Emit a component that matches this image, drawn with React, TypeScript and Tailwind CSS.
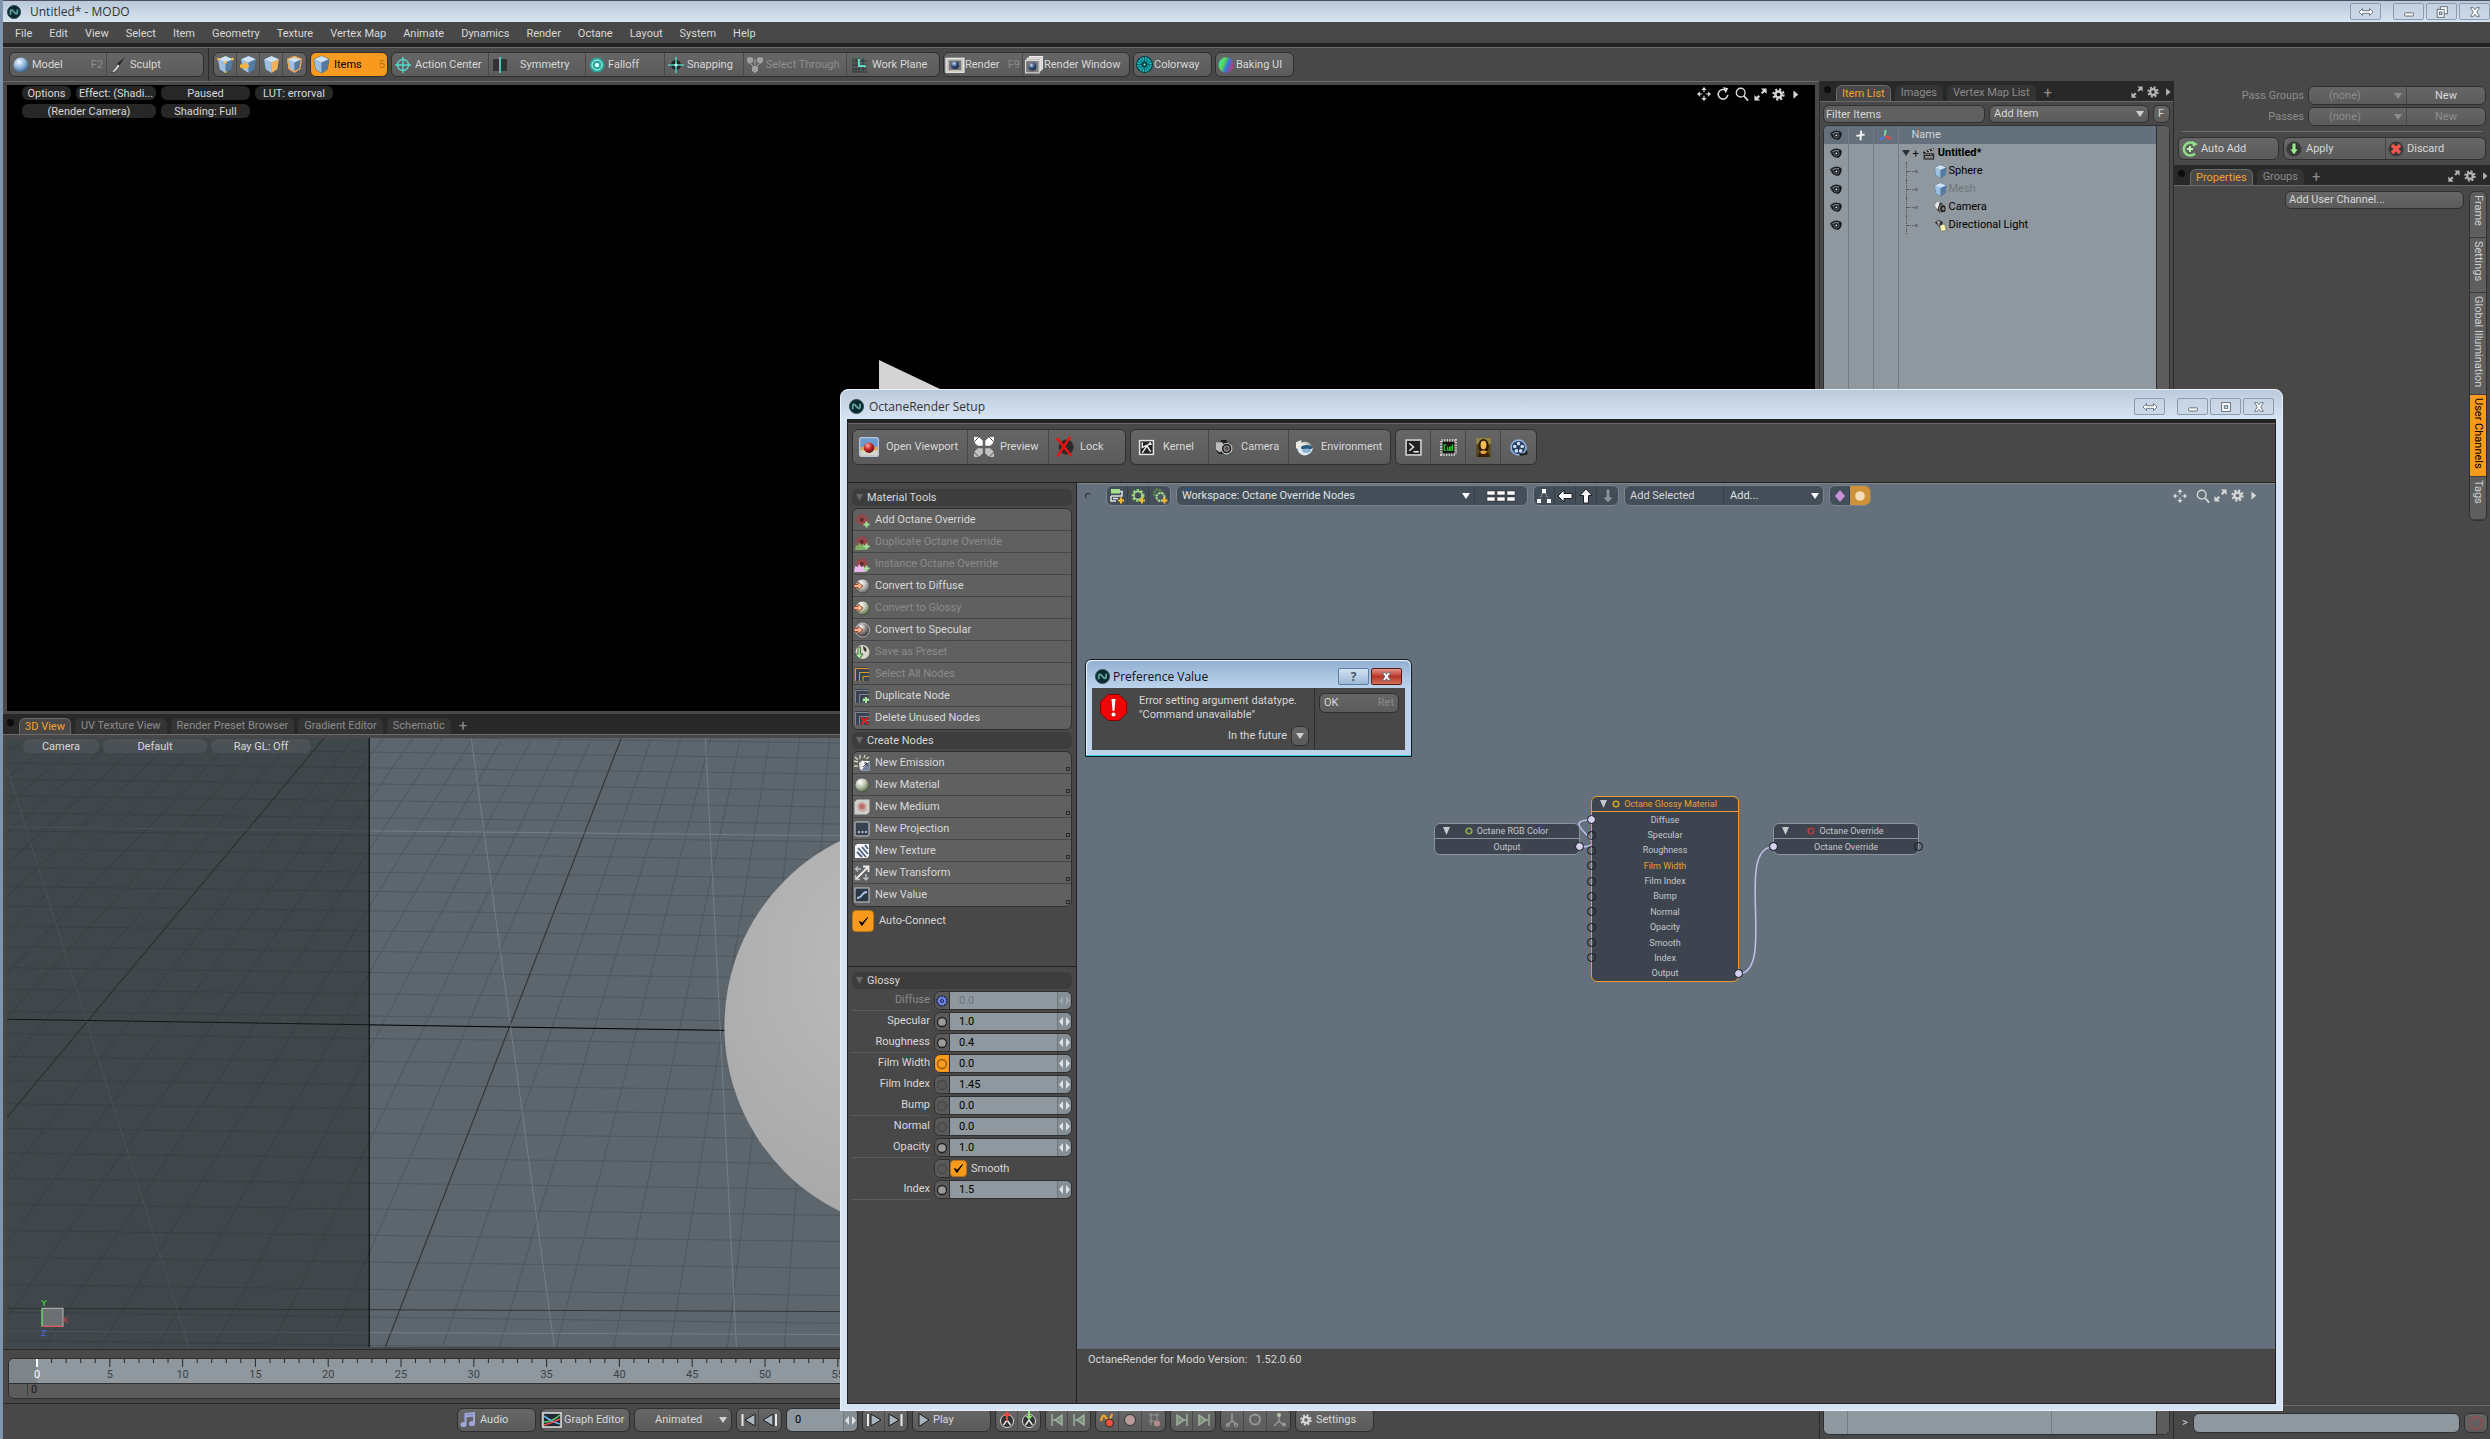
import React from "react";

type Kids = { children?: React.ReactNode };

const BALLS: Record<string, [string, string, string]> = {
	blue: ["#f2f8ff", "#8fb6dc", "#2f557f"],
	grey: ["#ffffff", "#b9bcb9", "#5c605c"],
	green: ["#ffffff", "#b8c2ac", "#4b6136"],
	dark: ["#ffffff", "#8a8484", "#2c2424"],
	red: ["#ffb0a0", "#c22626", "#5a0d0d"],
	navy: ["#cfe0f4", "#35527f", "#10203c"],
};

const Gradients: React.FC = () => (
	<svg width="0" height="0" className="absolute" aria-hidden="true">
		<defs>
			{Object.entries(BALLS).map(([id, c]) => (
				<radialGradient key={id} id={id} cx="0.38" cy="0.3" r="0.75">
					<stop offset="0" stopColor={c[0]} />
					<stop offset="0.5" stopColor={c[1]} />
					<stop offset="1" stopColor={c[2]} />
				</radialGradient>
			))}
			<linearGradient id="rainbow" x1="0" y1="0.3" x2="1" y2="0.7">
				<stop offset="0" stopColor="#38e0c0" />
				<stop offset="0.3" stopColor="#58e048" />
				<stop offset="0.6" stopColor="#3870e0" />
				<stop offset="1" stopColor="#d83060" />
			</linearGradient>
			<radialGradient id="shape" gradientUnits="userSpaceOnUse" cx="900" cy="230" r="290">
				<stop offset="0" stopColor="#bdbdbd" />
				<stop offset="1" stopColor="#a6a6a6" />
			</radialGradient>
		</defs>
	</svg>
);

const cube = (accent?: string, mark?: React.ReactNode) => (
	<>
		<path d="M8 0 15 3 13.5 12.5 8 16 2.5 12.5 1 3Z" fill="#7fa3c8" stroke="#2e4964" strokeWidth="0.6" />
		<path d="M8 0 15 3 8 6 1 3Z" fill="#cfe2f4" />
		<path d="M1 3 8 6V16L2.5 12.5Z" fill="#9dbfe0" />
		<path d="M15 3 8 6V16L13.5 12.5Z" fill={accent || "#557ba3"} />
		{mark}
	</>
);

const burst = (color: string) => (
	<>
		<path
			d="M7 1 8.6 3.6 11 1.8 11.3 4.8 14 4.4 12.6 7 15 8 12.6 9.4 13.4 12 10.8 11.5 9.8 14 7.6 12 5.2 13.6 5 11 2 11 3.6 8.6 1 7.4 3.6 6 2.6 3.4 5.4 4Z"
			fill={color}
			opacity="0.85"
		/>
		<circle cx="7.8" cy="7.8" r="2" fill="#5a2d30" />
	</>
);

const plus = (x: number, y: number, c = "#a6e39a") => (
	<path d={`M${x - 3} ${y}H${x + 3}M${x} ${y - 3}V${y + 3}`} stroke={c} strokeWidth="2" />
);

const arrowIn = (
	<path d="M0 6.5H4V4L9 8 4 12V9.5H0Z" fill="#ffb28f" stroke="#7a3a20" strokeWidth="0.8" />
);

const nodeLines = (c: string) => (
	<>
		<rect x="1" y="1" width="14" height="14" fill="#39424e" />
		<path d="M1.5 15V2.5H15M5.5 15V6.5H15M9 15V10.5H15" fill="none" stroke={c} />
	</>
);

const ICONS: Record<string, React.ReactNode> = {
	logo: (
		<>
			<circle cx="8" cy="8" r="7.5" fill="#0b2a30" stroke="#2c4b52" />
			<path d="M4 11V7.5Q4 5 6 6L9.5 9.5Q11.8 11 11.8 8.5V5" fill="none" stroke="#5fa09b" strokeWidth="2" />
		</>
	),
	ballBlue: <ellipse cx="8" cy="8" rx="7.5" ry="7.5" fill="url(#blue)" />,
	brush: (
		<>
			<path d="M15 0 9 9 7 7Z" fill="#222" />
			<path d="M8 7 10 9 5 15 1 15.5Q4 13 8 7Z" fill="#d8d8d8" stroke="#222" strokeWidth="0.6" />
		</>
	),
	vert: cube(undefined, <g fill="#f7b84a"><circle cx="1.5" cy="3" r="1.3" /><circle cx="14.5" cy="3" r="1.3" /><circle cx="8" cy="6" r="1.2" /><circle cx="8" cy="15" r="1" /></g>),
	edge: cube(undefined, <path d="M0 8H4V5.5L9 9.5 4 13.5V11H0Z" fill="#ffb733" />),
	poly: cube("#f0b25a"),
	mat: cube(undefined, <path d="M1.5 3 8 0.5 14.5 3 13 12 8 15 3 12 1.5 3" fill="none" stroke="#f3a44a" strokeWidth="1.3" />),
	item: cube(),
	center: (
		<g fill="none" stroke="#52dccd" strokeWidth="1.4">
			<circle cx="8" cy="8" r="5.5" />
			<path d="M8 0V16M0 8H16" />
		</g>
	),
	symmetry: (
		<>
			<path d="M1 2H7V14H1ZM9 2H15V14H9Z" fill="#303333" />
			<path d="M8 0V16" stroke="#52dccd" strokeWidth="1.6" />
		</>
	),
	falloff: (
		<>
			<circle cx="8" cy="8" r="7.5" fill="#2aa79b" />
			<circle cx="8" cy="8" r="5" fill="none" stroke="#b5fff4" />
			<circle cx="8" cy="8" r="2.2" fill="#d6fffa" />
		</>
	),
	snap: (
		<>
			<circle cx="8" cy="8" r="5" fill="#1e2424" />
			<path d="M8 0V16M0 8H16" stroke="#52c9bd" strokeWidth="1.6" />
			<circle cx="8" cy="8" r="1.6" fill="#a8fff4" />
		</>
	),
	through: (
		<g fill="#bbb">
			<path d="M0 1 3 0 6 1V5L3 7 0 5ZM10 1 13 0 16 1V5L13 7 10 5ZM5 10 8 8.5 11 10V14L8 16 5 14Z" />
			<path d="M4 7 7 10M12 7 9 10M8 2V8" stroke="#ccc" />
		</g>
	),
	plane: (
		<>
			<path d="M1 1V15H15M4 1V15M7 1V15M11 1V15M1 4H15M1 8H15M1 12H15" stroke="#2f3838" fill="none" />
			<path d="M7 2V9H14" stroke="#58d9c6" strokeWidth="2" fill="none" />
		</>
	),
	render: (
		<>
			<rect x="0" y="2" width="16" height="12.5" fill="#c8c5bd" stroke="#eee" />
			<rect x="2.5" y="4" width="11" height="8.5" fill="#777" />
			<circle cx="8" cy="8" r="3.6" fill="url(#navy)" />
		</>
	),
	renderWin: (
		<>
			<rect x="4" y="0.5" width="11.5" height="11" fill="#b5b5b5" stroke="#eee" />
			<rect x="2" y="2" width="12" height="11" fill="#b5b5b5" stroke="#eee" />
			<rect x="0.5" y="4" width="12" height="11" fill="#777" stroke="#ddd" />
			<circle cx="6.5" cy="9.5" r="3.4" fill="url(#navy)" />
		</>
	),
	colorway: (
		<>
			<circle cx="8" cy="8" r="7.5" fill="#10b9bc" stroke="#08373a" />
			<path d="M8 1V15M1 8H15M3 3 13 13M13 3 3 13M5.3 1.6 10.7 14.4M14.4 5.3 1.6 10.7M10.7 1.6 5.3 14.4M1.6 5.3 14.4 10.7" stroke="#075458" strokeWidth="0.8" />
			<circle cx="8" cy="8" r="2.4" fill="#0b3a3e" />
			<circle cx="8" cy="8" r="1" fill="#6cf5f5" />
		</>
	),
	rainbow: <ellipse cx="8" cy="8" rx="7.5" ry="7.8" fill="url(#rainbow)" />,
	move: (
		<g fill="#d6d6d6">
			<path d="M8 0 11 3.5H5ZM8 16 5 12.5H11ZM0 8 3.5 5V11ZM16 8 12.5 11V5Z" />
			<path d="M8 3V6M8 10V13M3 8H6M10 8H13" stroke="#d6d6d6" strokeWidth="1.4" />
		</g>
	),
	rotate: (
		<>
			<path d="M12 4.5A5.5 5.5 0 1 0 13.5 9" fill="none" stroke="#d6d6d6" strokeWidth="1.8" />
			<path d="M8 0 14 1.5 11 7Z" fill="#d6d6d6" />
		</>
	),
	search: (
		<>
			<circle cx="6.5" cy="6.5" r="5" fill="none" stroke="#d6d6d6" strokeWidth="1.6" />
			<path d="M10 10 15 15.5" stroke="#d6d6d6" strokeWidth="2" />
		</>
	),
	expand: (
		<>
			<path d="M8.5 0.5H15.5V7.5L13 5 10.5 7.5 8.5 5.5 11 3Z" fill="#d6d6d6" />
			<path d="M7.5 15.5H0.5V8.5L3 11 5.5 8.5 7.5 10.5 5 13Z" fill="#d6d6d6" />
		</>
	),
	gear: (
		<>
			<circle cx="8" cy="8" r="3.8" fill="none" stroke="#d6d6d6" strokeWidth="3" />
			<circle cx="8" cy="8" r="6.2" fill="none" stroke="#d6d6d6" strokeWidth="2.8" strokeDasharray="2.6 2.27" />
		</>
	),
	right: <path d="M5 2 12 8 5 14Z" fill="#d6d6d6" />,
	eye: (
		<>
			<path d="M0 6Q7 -1 15 4Q17 9 12 14Q4 16 0 6Z" fill="#15181c" />
			<path d="M2 7Q7 3 12 5" fill="none" stroke="#9aa3ab" />
			<circle cx="8.5" cy="8.5" r="3.6" fill="#15181c" stroke="#8a939b" strokeWidth="0.8" />
			<circle cx="8.5" cy="8.5" r="1.3" fill="#dfe5ea" />
		</>
	),
	cross: <path d="M9 1 8 15M2 8.5 14 6.5" stroke="#f2f2f2" strokeWidth="2.8" />,
	axes: (
		<>
			<path d="M7 9 8 0" stroke="#7fd6a0" strokeWidth="3" />
			<path d="M7 9 0 14" stroke="#4a7de0" strokeWidth="3" />
			<path d="M7 9 16 13" stroke="#e04848" strokeWidth="3.6" />
		</>
	),
	clap: (
		<>
			<path d="M1 6 14 1 15 4 2 8Z" fill="#222" />
			<path d="M4 5 6 7M8 3.4 10 5.6M12 2 14 4" stroke="#ddd" strokeWidth="1.4" />
			<rect x="2" y="7.5" width="13" height="8" fill="#2a2a2a" />
			<path d="M3 9H14" stroke="#ddd" strokeDasharray="2 1.5" />
			<rect x="3.5" y="11" width="10" height="3" fill="#888" />
		</>
	),
	cam: (
		<>
			<path d="M3 3 9 2 13 5V14H7L3 10Z" fill="#333" />
			<path d="M1 5 4 1 7 2 4 11Z" fill="#e8e8e8" />
			<ellipse cx="11" cy="9.5" rx="4" ry="5" fill="#222" stroke="#bbb" />
			<ellipse cx="11.4" cy="9.5" rx="1.6" ry="2.2" fill="#888" />
		</>
	),
	light: (
		<>
			<path d="M1 4 6 1 11 4 8 11Z" fill="#222" />
			<path d="M3 3 6 1.5 8 4 6 9Z" fill="#999" />
			<path d="M7 8 13 6 15 14 9 15Z" fill="#fbf3a4" stroke="#555" strokeWidth="0.6" />
		</>
	),
	auto: (
		<>
			<path d="M13 3.5A6.5 6.5 0 1 0 13 12.5" fill="none" stroke="#8fdc88" strokeWidth="2.6" />
			<path d="M10 0 16 3 11 6Z" fill="#8fdc88" />
			{plus(8, 8, "#b9f5b2")}
		</>
	),
	apply: (
		<>
			<circle cx="8" cy="8" r="7.5" fill="#3a3a3a" />
			<path d="M6 2H10V8H12.5L8 14 3.5 8H6Z" fill="#9be88d" stroke="#1c2a1a" strokeWidth="0.8" />
		</>
	),
	discard: (
		<>
			<circle cx="8" cy="8" r="7.5" fill="#3a3a3a" />
			<path d="M4 4 12 12M12 4 4 12" stroke="#f1564e" strokeWidth="3.4" />
		</>
	),
	viewport: (
		<>
			<rect x="0.5" y="0.5" width="15" height="15" rx="1.5" fill="#6d9ad0" stroke="#b9c8d8" />
			<path d="M1 8H15V11H1Z" fill="#d8a850" />
			<rect x="1" y="10.5" width="14" height="4.5" fill="#d9d4c8" />
			<circle cx="8" cy="8.5" r="4.2" fill="url(#red)" />
		</>
	),
	preview: (
		<>
			<path d="M0 0H4L7 3V7H3L0 4ZM16 0V4L13 7H9V3L12 0Z" fill="#fff" />
			<path d="M0 16V12L3 9H7V13L4 16ZM16 16H12L9 13V9H13L16 12Z" fill="#c0c0c0" />
			<path d="M0 4 4 0M12 0 16 4M0 12 4 16M16 12 12 16" stroke="#555" strokeWidth="0.8" />
		</>
	),
	lock: (
		<>
			<circle cx="9" cy="8" r="6" fill="#2b2b2b" />
			<path d="M1.5 1 13 15M12 0 2 15.5" stroke="#f01010" strokeWidth="1.9" />
		</>
	),
	kernel: (
		<>
			<rect x="1.5" y="1.5" width="13" height="13" fill="#222" stroke="#e5e5e5" strokeWidth="1.4" />
			<path d="M4 3V8L8 6 12 12M12 3 8 7 4 13M10 5H13" stroke="#eee" strokeWidth="1.3" fill="none" />
		</>
	),
	camera: (
		<>
			<path d="M0 3H4L5 1H10L11 4H14V14H3L0 11Z" fill="#1d1d1d" />
			<path d="M0 3H6L7 6 4 13 0 10Z" fill="#bbb" />
			<circle cx="10" cy="9" r="5" fill="#222" stroke="#ccc" />
			<circle cx="10" cy="9" r="2.4" fill="#5b4a58" stroke="#999" />
		</>
	),
	env: (
		<>
			<ellipse cx="8.5" cy="9" rx="7" ry="6.5" fill="url(#grey)" />
			<path d="M1 8H16Q15 15 8 15.5 2 15 1 8Z" fill="#dfe8ee" />
			<ellipse cx="10" cy="8" rx="5.5" ry="2.4" fill="#2a5a80" />
			<ellipse cx="10" cy="11" rx="4" ry="2" fill="#86b2d4" />
			<path d="M0 3 5 1V8L0 9Z" fill="#e8e8e0" />
		</>
	),
	terminal: (
		<>
			<rect x="1" y="1" width="14" height="14" fill="#222" stroke="#ddd" strokeWidth="1.4" />
			<path d="M4 4 8 7.5 4 11M8 12H13" stroke="#eee" strokeWidth="1.4" fill="none" />
		</>
	),
	cuda: (
		<>
			<rect x="1.5" y="1.5" width="13" height="13" fill="none" stroke="#ccc" strokeWidth="3" strokeDasharray="1.2 1.2" />
			<rect x="2.5" y="2.5" width="11" height="11" fill="#101010" />
			<path d="M6 5.5H4V10.5H6M7.2 7V10.5H9V7M11.8 5V10.5H10.2V7.5H11.8" stroke="#19e019" fill="none" />
		</>
	),
	mona: (
		<>
			<rect x="1" y="-1" width="14" height="18" fill="#5b4a1e" />
			<path d="M1 -1H15V5H1Z" fill="#8f8440" />
			<ellipse cx="8" cy="6.5" rx="5" ry="6.5" fill="#2d1a08" />
			<path d="M2 17Q4 10 8 11 13 11 14 17Z" fill="#3a2008" />
			<ellipse cx="8" cy="5.6" rx="2.8" ry="4" fill="#f0bb58" />
			<path d="M4.5 12Q8 9 11.5 12L9.5 14H6.5Z" fill="#e0a040" />
		</>
	),
	reel: (
		<>
			<circle cx="8" cy="8" r="7" fill="#223a5e" stroke="#8fb2dc" strokeWidth="1.6" />
			<g fill="#cfe0f0"><circle cx="8" cy="4.3" r="1.7" /><circle cx="11.5" cy="7" r="1.7" /><circle cx="10" cy="11.2" r="1.7" /><circle cx="6" cy="11.2" r="1.7" /><circle cx="4.5" cy="7" r="1.7" /></g>
			<path d="M9 15 15.5 14V11" stroke="#111" strokeWidth="1.6" fill="none" />
		</>
	),
	over: <>{burst("#9c4346")}{plus(12.5, 12.5)}</>,
	overDup: <>{burst("#9c4346")}<path d="M1 16 2 11 4 12 5 8.5 7 11 10 10 10 13 12 14 11 16Z" fill="#7fae64" />{plus(12.5, 12.5)}</>,
	overInst: <>{burst("#9c4346")}<path d="M0 16 1 10 4 11 5 7.5 7 11 10 10 10 13 12 14 11 16Z" fill="#e8b9ee" />{plus(12.5, 12.5)}</>,
	toDiffuse: <><circle cx="8.5" cy="8" r="7" fill="url(#grey)" stroke="#333" strokeWidth="0.5" />{arrowIn}</>,
	toGlossy: <><circle cx="8.5" cy="8" r="7" fill="url(#green)" stroke="#333" strokeWidth="0.5" />{arrowIn}</>,
	toSpecular: <><circle cx="8.5" cy="8" r="7" fill="url(#dark)" stroke="#ccc" strokeWidth="0.8" />{arrowIn}</>,
	preset: (
		<>
			<circle cx="8.5" cy="8" r="7" fill="#d9d8c8" />
			<path d="M9 2Q14 4 12 8 9 7 9 2Z" fill="#3d3d33" />
			<path d="M4 3H6.5V10H9L5.5 15 1 10H4Z" fill="#a8e89b" stroke="#2d4a28" strokeWidth="0.8" />
		</>
	),
	selNodes: nodeLines("#e39a28"),
	dupNode: <>{nodeLines("#7d8794")}{plus(12, 12)}</>,
	delNode: <>{nodeLines("#7d8794")}<path d="M7.5 7.5 14 14M14 7.5 7.5 14" stroke="#e8181c" strokeWidth="2" /></>,
	emission: (
		<>
			<path d="M0 6 4 7M1 2 4 5M6 0V4M11 0 10 3M0 11H4M15 2 12 4" stroke="#d8d4b8" strokeWidth="1.3" />
			<rect x="7" y="6" width="8.5" height="9.5" fill="#fff" />
			<path d="M7 15.5 15.5 6V15.5H11Z" fill="#6f8097" />
			<path d="M5 8 9 5V12L6 15Z" fill="#e5e5e5" />
			<path d="M9 12 13 8M10 8H13V11" stroke="#334" fill="none" />
		</>
	),
	material: <circle cx="8" cy="8" r="7" fill="url(#green)" stroke="#444" strokeWidth="0.6" />,
	medium: (
		<>
			<path d="M3 0.5H15.5V13L13 15.5H0.5V3Z" fill="#cfcfcb" />
			<circle cx="8" cy="8" r="5" fill="#c8aaa2" />
			<circle cx="8" cy="7.5" r="2.8" fill="#bd6f68" />
		</>
	),
	projection: (
		<>
			<rect x="1" y="1" width="14" height="14" rx="1" fill="#39434f" stroke="#c6ccd2" />
			<path d="M4 11H6M7.5 11H9.5M11 11H13" stroke="#dde" strokeWidth="1.6" />
		</>
	),
	texture: (
		<>
			<path d="M3 1H15V13L13 15H1V3Z" fill="#f4f6fa" />
			<path d="M4 5 12 14M8 4 14 11M3 9 8 14M11 2 14 6" stroke="#4d607c" strokeWidth="1.8" />
		</>
	),
	transform: (
		<>
			<path d="M2 14 14 2M9 1.5H14.5V7" stroke="#e8eaec" strokeWidth="1.8" fill="none" />
			<path d="M2 4H7M4 1.5 1.5 4 4 6.5M12 9V15M9.5 12.5 12 15 14.5 12.5M1.5 10V14.5H6" stroke="#b8c0c8" strokeWidth="1.4" fill="none" />
		</>
	),
	value: (
		<>
			<rect x="1" y="1" width="14" height="14" fill="#2d3744" stroke="#c6ccd2" />
			<path d="M3 11Q6 11 8 8T13 5" stroke="#a9c4e6" strokeWidth="1.8" fill="none" />
		</>
	),
	wsNode: (
		<>
			<rect x="2" y="1" width="9" height="4.5" fill="#a5e08a" />
			<path d="M2 8H13V3.5H11M2 8V13H7M9 10.5H4" stroke="#dfe3e6" strokeWidth="1.5" fill="none" />
			{plus(12, 12.5, "#f4b733")}
		</>
	),
	wsGear: (
		<>
			<circle cx="8" cy="7.5" r="5" fill="none" stroke="#8ccf6f" strokeWidth="3" strokeDasharray="2.4 1.2" />
			<circle cx="8" cy="7.5" r="4" fill="none" stroke="#a8de8e" strokeWidth="1.4" />
			{plus(12, 12.5, "#f4b733")}
		</>
	),
	wsGears: (
		<>
			<circle cx="6" cy="5.5" r="4" fill="none" stroke="#5f8a52" strokeWidth="2.4" strokeDasharray="2.2 1" />
			<circle cx="8.5" cy="9" r="4" fill="#4c5762" stroke="#a8de8e" strokeWidth="2" strokeDasharray="2.4 0.8" />
			{plus(12.5, 12.5, "#f4b733")}
		</>
	),
	grid: (
		<g fill="#fff" stroke="#222" strokeWidth="0.5">
			{[0, 10, 20].map(x => [3, 9].map(y => <rect key={`${x}${y}`} x={x - 6} y={y} width="8" height="4" />))}
		</g>
	),
	tree: (
		<>
			<path d="M6 1H10V5H6ZM1 11H5V15H1ZM11 11H15V15H11Z" fill="#fff" />
			<path d="M7 5 4 10M9 5 12 10" stroke="#ddd" strokeDasharray="1.5 1.5" />
		</>
	),
	left: <path d="M1 8 7 2V5.5H15V10.5H7V14Z" fill="#fff" stroke="#1c2026" />,
	up: <path d="M8 1 14 7.5H10.5V15H5.5V7.5H2Z" fill="#fff" stroke="#1c2026" />,
	down: <path d="M8 15 13.5 9H10V1H6V9H2.5Z" fill="#8a939b" stroke="#3b444e" />,
	diamond: <path d="M8 2 13 8 8 14 3 8Z" fill="#c690d8" />,
	dot: <circle cx="8" cy="8" r="5.5" fill="#f4ddb8" />,
	note: (
		<>
			<path d="M5.5 12V2L14 1V11" fill="none" stroke="#9fa8dd" strokeWidth="2" />
			<path d="M5.5 4.5 14 3.5" stroke="#9fa8dd" strokeWidth="2" />
			<ellipse cx="3.5" cy="12.5" rx="3" ry="2.6" fill="#9fa8dd" />
			<ellipse cx="12" cy="11.5" rx="3" ry="2.6" fill="#9fa8dd" />
		</>
	),
	graph: (
		<>
			<rect x="-1" y="1" width="18" height="14" fill="#23282c" stroke="#eee" strokeWidth="1.4" />
			<path d="M0 10Q8 10 16 3" stroke="#58d070" strokeWidth="1.6" fill="none" />
			<path d="M0 4Q8 10 16 12" stroke="#5fb8f0" strokeWidth="1.6" fill="none" />
			<path d="M0 13Q8 11 16 7" stroke="#e85050" strokeWidth="1.6" fill="none" />
		</>
	),
	first: <><path d="M15 2V14L5 8Z" fill="#a9b6c0" stroke="#181818" /><path d="M2.5 2V14" stroke="#e8e8e8" strokeWidth="2" /></>,
	prev: <><path d="M11 2V14L1 8Z" fill="#a9b6c0" stroke="#181818" /><path d="M14 2V14" stroke="#e8e8e8" strokeWidth="2" /></>,
	next: <><path d="M5 2V14L15 8Z" fill="#a9b6c0" stroke="#181818" /><path d="M2 2V14" stroke="#e8e8e8" strokeWidth="2" /></>,
	last: <><path d="M1 2V14L11 8Z" fill="#a9b6c0" stroke="#181818" /><path d="M13.5 2V14" stroke="#e8e8e8" strokeWidth="2" /></>,
	play: <path d="M3 1.5V14.5L13 8Z" fill="#a9b6c0" stroke="#181818" />,
	keyIn: <><circle cx="8" cy="9" r="6.5" fill="#333" stroke="#ddd" /><path d="M4.5 13 8 8 11.5 13" stroke="#eee" fill="none" strokeWidth="1.4" /><path d="M8 -1 11.5 4H9V9H7V4H4.5Z" fill="#f0453c" /></>,
	keyOut: <><circle cx="8" cy="9" r="6.5" fill="#333" stroke="#ddd" /><path d="M4.5 13 8 8 11.5 13" stroke="#eee" fill="none" strokeWidth="1.4" /><path d="M8 8 4.5 4H7V-1H9V4H11.5Z" fill="#8de07a" /></>,
	kFirst: <path d="M3 2V14M4 8H7M13 3V13L6 8Z" stroke="#a0b5a0" strokeWidth="1.4" fill="#7d907d" />,
	kLast: <path d="M13 2V14M12 8H9M3 3V13L10 8Z" stroke="#a0b5a0" strokeWidth="1.4" fill="#7d907d" />,
	key: <><path d="M2 9Q4 0 7 6T13 2" stroke="#f2a32a" strokeWidth="2.2" fill="none" /><circle cx="10.5" cy="11" r="4" fill="#ee5038" stroke="#2a2a2a" /></>,
	rec: <circle cx="8" cy="8" r="5.5" fill="#b99b9b" stroke="#333" />,
	keyBox: <><path d="M3 3H13M3 9H9M5 1V13M11 1V9" stroke="#999" /><circle cx="11" cy="11.5" r="3" fill="#b08a8a" /></>,
	tripod: <><path d="M8 1V9L2 14M8 9 14 13" stroke="#999" fill="none" strokeWidth="1.6" /><circle cx="4" cy="13" r="1.6" fill="none" stroke="#999" /><circle cx="12" cy="13" r="1.6" fill="none" stroke="#999" /></>,
	orbit: <><circle cx="8" cy="7.5" r="5" fill="none" stroke="#999" strokeWidth="2" /><path d="M3 13 8 8 13 13" stroke="#777" fill="none" /></>,
	pin: <><path d="M8 3V9L3 14M8 9 13 14" stroke="#999" fill="none" strokeWidth="1.4" /><circle cx="8" cy="3" r="2" fill="#b5c5a5" /><circle cx="13" cy="12.5" r="2" fill="#999" /></>,
	ring: <circle cx="8" cy="8" r="6" fill="none" stroke="#8c5050" strokeWidth="1.8" />,
	// window buttons
	arrows: <path d="M0 8 4 4V6.5H12V4L16 8 12 12V9.5H4V12Z" fill="#fff" stroke="#56606c" strokeWidth="0.9" />,
	min: <rect x="3" y="9" width="10" height="3.6" rx="0.8" fill="#fff" stroke="#56606c" />,
	max: <><rect x="3" y="3" width="10" height="10" fill="#fff" stroke="#56606c" /><rect x="6" y="6.5" width="4" height="3" fill="#ccd8e4" stroke="#56606c" /></>,
	restore: <><rect x="6" y="2" width="8" height="8" fill="#fff" stroke="#56606c" /><rect x="2.5" y="5" width="8" height="9" fill="#fff" stroke="#56606c" /><rect x="5" y="8" width="3" height="3" fill="#ccd8e4" stroke="#56606c" /></>,
	close: <path d="M3 3H6.3L8 5.5 9.7 3H13L10 8 13 13H9.7L8 10.5 6.3 13H3L6 8Z" fill="#fff" stroke="#56606c" strokeWidth="0.9" />,
};

const Icon: React.FC<{ name: string; size?: number; dim?: boolean }> = ({ name, size = 16, dim }) => (
	<svg
		width={size}
		height={size}
		viewBox="0 0 16 16"
		className={`shrink-0 overflow-visible ${dim ? "opacity-70" : ""}`}
		aria-hidden="true"
	>
		{ICONS[name]}
	</svg>
);

const Group: React.FC<Kids & { className?: string }> = ({ children, className = "" }) => (
	<div className={`flex shrink-0 overflow-hidden rounded-md border border-[#2f2f2f] bg-linear-to-b from-[#666666] to-[#5b5b5b] divide-x divide-[#484848] ${className}`}>
		{children}
	</div>
);

interface ToolProps {
	icon?: string;
	label?: string;
	hint?: string;
	className?: string;
	size?: number;
	disabled?: boolean;
}

const Tool: React.FC<ToolProps> = ({ icon, label, hint, className = "", size = 16, disabled }) => (
	<button
		type="button"
		disabled={disabled}
		aria-label={label ?? icon}
		className={`flex h-full items-center whitespace-nowrap ${disabled ? "text-[#8f8f8f]" : "text-[#d8d8d8]"} ${className}`}
	>
		{icon && <Icon name={icon} size={size} dim={disabled} />}
		{label && <span>{label}</span>}
		{hint && <span className="ml-auto text-[#8c8c8c]">{hint}</span>}
	</button>
);

const Drop: React.FC<{ label: string; text: string; className?: string; pad?: string; arrow?: string; disabled?: boolean }> = ({
	label, text, className = "", pad = "pl-1", arrow = "fill-[#d0d0d0]", disabled
}) => (
	<div className={`relative h-full ${className}`}>
		<select aria-label={label} disabled={disabled} className={`h-full w-full appearance-none bg-transparent opacity-100 outline-none ${pad}`}>
			<option>{text}</option>
		</select>
		<svg viewBox="0 0 8 6" className={`pointer-events-none absolute right-1 top-0 bottom-0 my-auto h-[6px] w-2 ${arrow}`}>
			<path d="M0 0H8L4 6Z" />
		</svg>
	</div>
);

const WinButton: React.FC<{ icon: string }> = ({ icon }) => (
	<button type="button" aria-label={icon} className="flex h-[17px] w-[31px] items-center justify-center rounded-xs border border-[#8b9bb0] bg-[#c6d4e3]/60">
		<Icon name={icon} size={14} />
	</button>
);

const WindowButtons: React.FC<{ third: string }> = ({ third }) => (
	<div className="ml-auto flex items-center gap-[2px]">
		<WinButton icon="arrows" />
		<span className="w-2" />
		<WinButton icon="min" />
		<WinButton icon={third} />
		<WinButton icon="close" />
	</div>
);

const Tabs: React.FC<{ tabs: string[]; tools?: boolean }> = ({ tabs, tools }) => (
	<div className="flex h-[21px] shrink-0 items-end border-b border-[#6a6a6a] bg-[#282828] text-[#8c8c8c]">
		<span className="mb-2 ml-1 mr-[5px] size-[7px] rounded-full bg-[#0c0c0c]" />
		<div className="flex gap-1">
			{tabs.map((t, i) => (
				<button
					key={t}
					type="button"
					className={i === 0
						? "h-4 rounded-t-md border-x border-t border-[#6a6a6a] bg-[#484848] px-[5px] leading-4 text-[#f5a02c]"
						: "h-4 rounded-t-md bg-[#343434] px-1.5 leading-4"}
				>
					{t}
				</button>
			))}
			<button type="button" aria-label="Add tab" className="px-1 text-[15px] leading-4">+</button>
		</div>
		{tools && (
			<div className="mb-[3px] ml-auto flex items-center gap-1 opacity-80">
				<Icon name="expand" size={12} />
				<Icon name="gear" size={12} />
				<Icon name="right" size={10} />
			</div>
		)}
	</div>
);

const Chip: React.FC<Kids & { className?: string }> = ({ children, className = "" }) => (
	<button type="button" className={`h-[14px] overflow-hidden rounded-md text-center leading-[13px] whitespace-nowrap text-[#d8d8d8] ${className}`}>
		{children}
	</button>
);

const MENU = ["File", "Edit", "View", "Select", "Item", "Geometry", "Texture", "Vertex Map", "Animate", "Dynamics", "Render", "Octane", "Layout", "System", "Help"];

const MainToolbar: React.FC = () => (
	<div className="flex h-[34px] shrink-0 items-center gap-[3px] border-t border-[#6c6c6c] pl-[6px]">
		<Group className="h-[25px] w-[195px]">
			<Tool icon="ballBlue" label="Model" hint="F2" className="w-[97px] gap-[3px] px-[3px]" />
			<Tool icon="brush" label="Sculpt" className="grow gap-1 px-[3px]" />
		</Group>
		<span className="mx-px h-full w-px bg-[#2c2c2c]" />
		<Group className="h-[25px]">
			{["vert", "edge", "poly", "mat"].map(n => <Tool key={n} icon={n} className="w-[23px] justify-center" size={17} />)}
		</Group>
		<button type="button" className="flex h-[25px] w-[78px] items-center gap-1 rounded-md border border-[#2f2f2f] bg-[#f79a1e] px-[2px] text-black">
			<Icon name="item" size={17} />Items<span className="ml-auto text-[#b87416]">5</span>
		</button>
		<Group className="h-[25px]">
			<Tool icon="center" label="Action Center" className="w-[97px] gap-1 px-[3px]" />
			<Tool icon="symmetry" label="Symmetry" className="w-[97px] gap-3 px-[3px]" />
			<Tool icon="falloff" label="Falloff" className="w-[79px] gap-[3px] px-[3px]" />
			<Tool icon="snap" label="Snapping" className="w-[79px] gap-[3px] px-[3px]" />
			<Tool icon="through" label="Select Through" className="w-[103px] gap-[3px] px-[3px]" disabled />
			<Tool icon="plane" label="Work Plane" className="w-[92px] gap-1 px-[5px]" />
		</Group>
		<Group className="h-[25px]">
			<Tool icon="render" label="Render" hint="F9" size={18} className="w-[79px] gap-px px-[2px]" />
			<Tool icon="renderWin" label="Render Window" size={18} className="w-[106px] gap-px px-[2px]" />
		</Group>
		<Group className="h-[25px]">
			<Tool icon="colorway" label="Colorway" size={17} className="w-[77px] gap-px px-[2px]" />
		</Group>
		<Group className="h-[25px]">
			<Tool icon="rainbow" label="Baking UI" className="w-[77px] gap-[2px] px-[2px]" />
		</Group>
	</div>
);

// Horizontal grid rows get wider apart towards the camera
const ROWS = Array.from({ length: 30 }, (_, i) => -6 + i * 15 + i * i * 0.24);

const Viewport3D: React.FC = () => (
	<div className="relative mx-1 mb-[2px] grow overflow-hidden bg-[#5d666d]">
		<svg className="absolute inset-0 h-full w-full" viewBox="0 0 1807 609" preserveAspectRatio="xMinYMin slice">
			<g stroke="#3c444b" strokeWidth="1" opacity="0.4">
				{ROWS.map(y => <path key={y} d={`M0 ${y}L1807 ${y + 24}`} />)}
				{Array.from({ length: 31 }, (_, i) => i - 12).map(k => (
					<path key={k} d={`M${317 + k * 29.7} 0L${-192 + k * 57} 609`} />
				))}
			</g>
			<g stroke="#262c31">
				<path d="M317 0L-192 609M614 0L378 609M0 570L1807 577" opacity="0.8" />
				<path d="M0 281L1807 309" stroke="#000" />
			</g>
			<g stroke="#98a2ab" opacity="0.4">
				<path d="M0 30L182 609M464 0L547 609M698 0L729 609M0 89L1807 108M0 593L1807 600" />
				<path d="M232 0L330 609" opacity="0.4" />
			</g>
			<rect width="362" height="609" fill="#242b2b" opacity="0.52" />
			<path d="M362 0V609" stroke="#000" />
			<circle cx="923" cy="288" r="206" fill="url(#shape)" />
			<rect x="35" y="570" width="21" height="18" fill="#6c7072" stroke="#b8b8b8" />
			<path d="M35 570V588" stroke="#4be04b" />
			<path d="M35 588H56" stroke="#e04b4b" />
			<g fontFamily="Liberation Sans" fontSize="9">
				<text x="34" y="568" fill="#4be04b">Y</text>
				<text x="55" y="585" fill="#c84848">X</text>
				<text x="34" y="598" fill="#4868e0">Z</text>
			</g>
		</svg>
		<div className="relative flex gap-1 pl-4 pt-px">
			<Chip className="w-[76px] bg-[#4b5154]">Camera</Chip>
			<Chip className="w-[104px] bg-[#4b5154]">Default</Chip>
			<Chip className="w-[100px] bg-[#4b5154]">Ray GL: Off</Chip>
		</div>
	</div>
);

const Timeline: React.FC = () => (
	<div className="h-[54px] shrink-0 overflow-hidden border-t border-[#2a2a2a] px-[5px] pt-2">
		<div className="overflow-hidden rounded-md border border-[#2f2f2f]">
			<svg className="block h-6 w-full bg-[#8f989f]" fontFamily="Roboto" fontSize="11" textAnchor="middle">
				<rect width="28" height="24" fill="#7d858b" />
				{Array.from({ length: 121 }, (_, i) => (
					<path key={i} d={`M${28 + i * 14.56} 0V${i % 5 ? 4 : 8}`} stroke={i ? "#23282c" : "#ffffff"} strokeWidth={i ? 1 : 2} />
				))}
				{Array.from({ length: 25 }, (_, i) => (
					<text key={i} x={28 + i * 72.8} y="19" fill={i ? "#3a4248" : "#ffffff"}>{i * 5}</text>
				))}
			</svg>
			<div className="h-[15px] border-t border-[#2f2f2f] bg-[#5c5c5c]">
				<div className="ml-[18px] border-l border-[#3c3c3c] pl-[3px] leading-[12px] text-[#1c1c1c]">0</div>
			</div>
		</div>
	</div>
);

const Transport: React.FC = () => (
	<div className="flex h-9 shrink-0 items-start gap-1 border-t border-[#2a2a2a] pl-[454px] pt-1">
		<Group className="h-6 w-[79px]"><Tool icon="note" label="Audio" className="gap-1 px-[2px]" /></Group>
		<Group className="h-6 w-[90px]"><Tool icon="graph" label="Graph Editor" className="gap-1 px-[3px]" /></Group>
		<Group className="h-6 w-[98px] text-[#d8d8d8]"><Drop label="Animation mode" text="Animated" pad="pl-5" className="grow" /></Group>
		<Group className="h-6">
			<Tool icon="first" className="w-[22px] justify-center" /><Tool icon="prev" className="w-[22px] justify-center" />
		</Group>
		<div className="flex h-6 w-[72px] overflow-hidden rounded-md border border-[#2f2f2f]">
			<input aria-label="Current frame" defaultValue="0" className="w-0 grow bg-[#8f989f] pl-2 text-black" />
			<Spin />
		</div>
		<Group className="h-6">
			<Tool icon="next" className="w-[22px] justify-center" /><Tool icon="last" className="w-[22px] justify-center" />
		</Group>
		<Group className="h-6 w-[79px]"><Tool icon="play" label="Play" className="gap-px px-[3px]" /></Group>
		{[["keyIn", "keyOut"], ["kFirst", "kFirst"], ["key", "rec", "keyBox"], ["kLast", "kLast"], ["tripod", "orbit", "pin"]].map((g, i) => (
			<Group key={i} className="h-6">
				{g.map((n, j) => <Tool key={j} icon={n} className={g.length === 3 ? "w-[23px] justify-center" : "w-[22px] justify-center"} />)}
			</Group>
		))}
		<Group className="h-6 w-[79px]"><Tool icon="gear" label="Settings" size={12} className="gap-1 px-1" /></Group>
	</div>
);

const ITEMS = [
	{ icon: "item", name: "Sphere" },
	{ icon: "item", name: "Mesh", dim: true },
	{ icon: "cam", name: "Camera" },
	{ icon: "light", name: "Directional Light" },
];

const cell = "border-r border-[#737c85] p-0";

const ItemList: React.FC = () => (
	<section className="flex w-[354px] shrink-0 flex-col border-l border-[#2a2a2a]">
		<Tabs tabs={["Item List", "Images", "Vertex Map List"]} tools />
		<div className="flex gap-1 px-[3px] pt-[3px] text-[#d8d8d8]">
			<input aria-label="Filter items" placeholder="Filter Items" className="h-[18px] w-[162px] rounded-md border border-[#2f2f2f] bg-[#606060] pl-[2px] placeholder:text-[#d8d8d8]" />
			<Group className="h-[18px] grow"><Drop label="Add item" text="Add Item" className="grow" /></Group>
			<Group className="h-[18px] w-[17px]"><Tool label="F" className="px-1" /></Group>
		</div>
		<div className="mx-[3px] mt-[2px] flex grow overflow-hidden rounded-t-md border border-[#2f2f2f] bg-[#8f989f] text-black">
			<table className="h-full grow table-fixed border-collapse">
				<colgroup><col className="w-6" /><col className="w-[25px]" /><col className="w-[25px]" /><col /></colgroup>
				<thead>
					<tr className="h-[18px] bg-[#64707c] text-left text-[#d0d4d8]">
						<th className={cell}><div className="flex justify-center"><Icon name="eye" size={12} /></div></th>
						<th className={cell}><div className="flex justify-center"><Icon name="cross" size={11} /></div></th>
						<th className={cell}><div className="flex justify-center"><Icon name="axes" size={11} /></div></th>
						<th className="p-0 pl-[13px] font-normal">Name</th>
					</tr>
				</thead>
				<tbody>
					<tr className="h-[18px]">
						<td className={cell}><div className="flex justify-center"><Icon name="eye" size={12} /></div></td>
						<td className={cell} /><td className={cell} />
						<td className="p-0">
							<div className="flex items-center gap-[3px] pl-[3px]">
								<svg width="8" height="6"><path d="M0 0H8L4 6Z" fill="#2c3034" /></svg>
								<span className="leading-none">+</span>
								<Icon name="clap" size={13} />
								<b>Untitled*</b>
							</div>
						</td>
					</tr>
					{ITEMS.map(it => (
						<tr key={it.name} className="h-[18px]">
							<td className={cell}><div className="flex justify-center"><Icon name="eye" size={12} /></div></td>
							<td className={cell} /><td className={cell} />
							<td className="p-0">
								<div className="flex h-[18px] items-center pl-[7px]">
									<span className="h-full w-px border-l border-dotted border-[#4c5359]" />
									<span className="w-2 border-t border-dotted border-[#4c5359]" />
									<span className="mr-4 size-[3px] bg-[#6c757d]" />
									<Icon name={it.icon} size={13} />
									<span className={it.dim ? "ml-[2px] text-[#6f7880]" : "ml-[2px]"}>{it.name}</span>
								</div>
							</td>
						</tr>
					))}
					<tr><td className={cell} /><td className={cell} /><td className={cell} /><td /></tr>
				</tbody>
			</table>
			<div className="w-[13px] border-l border-[#2f2f2f] bg-[#5c5c5c]" />
		</div>
		<div className="mx-[3px] mb-1 flex h-[400px] overflow-hidden rounded-b-md border border-t-0 border-[#2f2f2f] bg-[#8f989f]">
			<div className="w-6 border-r border-[#737c85]" />
			<div className="w-[204px] border-r border-[#737c85]" />
			<div className="ml-auto w-[13px] border-l border-[#2f2f2f] bg-[#5c5c5c]" />
		</div>
	</section>
);

const SIDE = [
	{ name: "Frame", h: "h-[46px]" },
	{ name: "Settings", h: "h-[55px]" },
	{ name: "Global Illumination", h: "h-[102px]" },
	{ name: "User Channels", h: "h-[82px]", on: true },
	{ name: "Tags", h: "h-[43px]" },
];

const PropertiesPanel: React.FC = () => (
	<section className="flex w-[317px] shrink-0 flex-col border-l border-[#2a2a2a]">
		<div className="flex h-[84px] shrink-0 flex-col px-1 pt-[5px]">
			{["Pass Groups", "Passes"].map((l, i) => (
				<div key={l} className="mb-[2px] flex items-center justify-end gap-1 text-[#8c8c8c]">
					<span>{l}</span>
					<Group className="h-[19px] w-[178px]">
						<Drop label={l} text="(none)" pad="pl-5" disabled className="w-[98px]" arrow="fill-[#8c8c8c]" />
						<Tool label="New" className="grow justify-center" disabled={i === 1} />
					</Group>
				</div>
			))}
			<hr className="mx-1 mt-[3px] border-[#707070]" />
			<div className="mt-[5px] flex gap-1">
				<Group className="h-[23px] w-[101px]"><Tool icon="auto" label="Auto Add" className="gap-[3px] px-[3px]" /></Group>
				<Group className="h-[23px] grow">
					<Tool icon="apply" label="Apply" className="w-[102px] gap-1 px-[2px]" />
					<Tool icon="discard" label="Discard" className="grow gap-[3px] px-[2px]" />
				</Group>
			</div>
		</div>
		<Tabs tabs={["Properties", "Groups"]} tools />
		<div className="flex grow justify-end gap-[5px] pr-[3px] pt-[5px]">
			<Group className="h-[18px] w-[179px]"><Tool label="Add User Channel..." className="px-[3px]" /></Group>
			<div className="flex w-[18px] flex-col self-start overflow-hidden rounded-md border border-[#2f2f2f] bg-[#5e5e5e] text-[#d0d0d0]">
				{SIDE.map(s => (
					<button
						key={s.name}
						type="button"
						className={`border-b border-[#3c3c3c] pt-[3px] text-left leading-4 whitespace-nowrap [writing-mode:vertical-rl] ${s.h} ${s.on ? "bg-[#f79a1e] text-black" : ""}`}
					>
						{s.name}
					</button>
				))}
			</div>
		</div>
		<div className="flex h-[34px] items-center gap-1 border-t border-[#6a6a6a] pl-2 pr-[2px] text-[#d0d0d0]">
			<label htmlFor="command">&gt;</label>
			<input id="command" className="ml-px h-5 w-0 grow rounded-md border border-[#2f2f2f] bg-[#8f989f] pl-1 text-black" />
			<Group className="h-5"><Tool icon="ring" className="w-[22px] justify-center" /></Group>
		</div>
	</section>
);

const MATERIAL_TOOLS = [
	{ icon: "over", label: "Add Octane Override" },
	{ icon: "overDup", label: "Duplicate Octane Override", off: true },
	{ icon: "overInst", label: "Instance Octane Override", off: true },
	{ icon: "toDiffuse", label: "Convert to Diffuse" },
	{ icon: "toGlossy", label: "Convert to Glossy", off: true },
	{ icon: "toSpecular", label: "Convert to Specular" },
	{ icon: "preset", label: "Save as Preset", off: true },
	{ icon: "selNodes", label: "Select All Nodes", off: true },
	{ icon: "dupNode", label: "Duplicate Node" },
	{ icon: "delNode", label: "Delete Unused Nodes" },
];

const CREATE_NODES = [
	{ icon: "emission", label: "New Emission" },
	{ icon: "material", label: "New Material" },
	{ icon: "medium", label: "New Medium" },
	{ icon: "projection", label: "New Projection" },
	{ icon: "texture", label: "New Texture" },
	{ icon: "transform", label: "New Transform" },
	{ icon: "value", label: "New Value" },
];

const Header: React.FC<Kids> = ({ children }) => (
	<h2 className="flex h-[17px] shrink-0 items-center gap-1 rounded-md bg-[#3d3d3d] pl-1 text-[#d8d8d8]">
		<svg width="7" height="7"><path d="M0 0H7L3.5 7Z" fill="#666" /></svg>
		{children}
	</h2>
);

const ToolStack: React.FC<{ items: { icon: string; label: string; off?: boolean }[]; more?: boolean }> = ({ items, more }) => (
	<div className="my-[2px] flex shrink-0 flex-col divide-y divide-[#464646] overflow-hidden rounded-md border border-[#2f2f2f] bg-[#606060]">
		{items.map(t => (
			<button key={t.label} type="button" disabled={t.off} className={`flex h-[22px] items-center gap-[5px] pl-px ${t.off ? "text-[#8b8b8b]" : "text-[#d8d8d8]"}`}>
				<Icon name={t.icon} size={16} />
				{t.label}
				{more && <span className="mr-px mb-[2px] ml-auto size-1 self-end border border-[#2c2c2c]" />}
			</button>
		))}
	</div>
);

const Spin: React.FC<{ dim?: boolean }> = ({ dim }) => (
	<span className="flex w-[14px] shrink-0 items-center justify-center border-l border-[#6f777e] bg-[#858e95]">
		<svg width="11" height="9" viewBox="0 0 11 9" className={dim ? "opacity-30" : ""}>
			<path d="M4 0V9L0 4.5ZM7 0V9L11 4.5Z" fill="#dfe3e6" />
		</svg>
	</span>
);

interface Param {
	label: string;
	value: string;
	dot: "on" | "off" | "link" | "active";
	line?: boolean;
}

const PARAMS: Param[] = [
	{ label: "Diffuse", value: "0.0", dot: "link", line: true },
	{ label: "Specular", value: "1.0", dot: "on" },
	{ label: "Roughness", value: "0.4", dot: "on", line: true },
	{ label: "Film Width", value: "0.0", dot: "active" },
	{ label: "Film Index", value: "1.45", dot: "off" },
	{ label: "Bump", value: "0.0", dot: "off", line: true },
	{ label: "Normal", value: "0.0", dot: "off" },
	{ label: "Opacity", value: "1.0", dot: "on", line: true },
	{ label: "Smooth", value: "", dot: "off" },
	{ label: "Index", value: "1.5", dot: "on", line: true },
];

const DOTS = {
	on: <circle cx="7" cy="8" r="4.5" fill="#9a9a9a" stroke="#1f1f1f" strokeWidth="1.3" />,
	off: <circle cx="7" cy="8" r="4.5" fill="#575757" stroke="#474747" strokeWidth="1.3" />,
	active: <circle cx="7" cy="8" r="4.5" fill="none" stroke="#8f5a10" strokeWidth="1.3" />,
	link: <><circle cx="7" cy="8" r="5" fill="#6f83e0" stroke="#1d2450" strokeWidth="1.4" strokeDasharray="2.5 0.6" /><circle cx="7" cy="8" r="1.5" fill="none" stroke="#1d2450" /></>,
};

const Check: React.FC<{ id: string; big?: boolean }> = ({ id, big }) => (
	<span className={`relative ${big ? "size-[22px]" : "h-[17px] w-[17px]"}`}>
		<input id={id} type="checkbox" defaultChecked className="block h-full w-full appearance-none rounded border border-[#b8741a] bg-[#f79a1e]" />
		<svg viewBox="0 0 16 16" className="pointer-events-none absolute inset-0 m-auto h-[13px] w-[13px]">
			<path d="M3 8 6 13 13 3 6.5 10Z" fill="#000" stroke="#000" strokeWidth="1.2" />
		</svg>
	</span>
);

const ParamRow: React.FC<{ p: Param }> = ({ p }) => {
	const id = p.label.replace(" ", "-");
	return (
		<div className="flex h-[21px] items-start">
			<label htmlFor={id} className={`mr-1 h-5 w-[78px] text-right leading-[18px] ${p.line ? "border-b border-[#5c5c5c]" : ""} ${p.dot === "link" ? "text-[#8b8b8b]" : "text-[#d8d8d8]"}`}>
				{p.value ? p.label : ""}
			</label>
			<div className="flex h-[19px] grow overflow-hidden rounded-md">
				<button type="button" aria-label={`${p.label} channel`} className={`w-4 shrink-0 rounded-l-md border border-[#2f2f2f] ${p.dot === "active" ? "bg-[#f79a1e]" : "bg-[#5a5a5a]"}`}>
					<svg width="14" height="16">{DOTS[p.dot]}</svg>
				</button>
				{p.value ? (
					<div className="flex grow overflow-hidden rounded-r-md border-y border-r border-[#2f2f2f]">
						<input id={id} defaultValue={p.value} className={`w-0 grow bg-[#8f989f] pl-[9px] ${p.dot === "link" ? "text-[#6c747b]" : "text-black"}`} />
						<Spin dim={p.dot === "link"} />
					</div>
				) : (
					<div className="flex items-center gap-1 text-[#d8d8d8]">
						<Check id={id} />
						<label htmlFor={id}>{p.label}</label>
					</div>
				)}
			</div>
		</div>
	);
};

const OctaneSidebar: React.FC = () => (
	<aside className="w-[229px] shrink-0 border-r border-[#222]">
		<div className="flex h-[483px] flex-col px-1 pt-[6px]">
			<Header>Material Tools</Header>
			<ToolStack items={MATERIAL_TOOLS} />
			<Header>Create Nodes</Header>
			<ToolStack items={CREATE_NODES} more />
			<div className="mt-px flex items-center gap-[5px] text-[#d8d8d8]">
				<Check id="auto-connect" big />
				<label htmlFor="auto-connect">Auto-Connect</label>
			</div>
		</div>
		<div className="border-t border-[#222] px-1 pt-[5px]">
			<Header>Glossy</Header>
			<div className="pt-[2px]">
				{PARAMS.map(p => <ParamRow key={p.label} p={p} />)}
			</div>
		</div>
	</aside>
);

interface NodeProps {
	title: string;
	rows: string[];
	ring: string;
	className: string;
	active?: boolean;
	inputs?: string[];
	outputs?: string[];
	linked?: string[];
}

const Port: React.FC<{ side: string; full: boolean }> = ({ side, full }) => (
	<span className={`absolute size-[9px] rounded-full border border-[#12151c] ${side} ${full ? "bg-[#d5d0f2]" : ""}`} />
);

const Node: React.FC<NodeProps> = ({ title, rows, ring, className, active, inputs = [], outputs = [], linked = [] }) => (
	<div className={`absolute flex flex-col rounded-md border bg-[#3d4450] text-[9px] leading-3 text-[#c3c6ca] ${active ? "border-[#e5a02b]" : "border-[#8a949e]"} ${className}`}>
		<div className={`flex h-[15px] shrink-0 items-center border-b px-2 ${active ? "border-[#e5a02b] text-[#e5a02b]" : "border-[#8a949e]"}`}>
			<svg width="7" height="8"><path d="M0 0H7L3.5 8Z" fill="#c3c8cc" /></svg>
			<span className="flex grow items-center justify-center gap-1 pr-2 whitespace-nowrap">
				<svg width="8" height="8"><circle cx="4" cy="4" r="2.8" fill="none" stroke={ring} strokeWidth="1.6" /></svg>
				{title}
			</span>
		</div>
		{rows.map(r => (
			<div key={r} className={`relative flex flex-1 items-center justify-center ${r === "Film Width" ? "text-[#e5a02b]" : ""}`}>
				{inputs.includes(r) && <Port side="-left-[5px]" full={linked.includes(r)} />}
				{r}
				{outputs.includes(r) && <Port side="-right-[5px]" full={linked.includes(r)} />}
			</div>
		))}
	</div>
);

const GLOSSY_IN = ["Diffuse", "Specular", "Roughness", "Film Width", "Film Index", "Bump", "Normal", "Opacity", "Smooth", "Index"];

const NodeBar: React.FC<Kids & { className?: string }> = ({ children, className = "" }) => (
	<div className={`flex h-[21px] overflow-hidden rounded-md border border-[#79848f] bg-[#444e59] divide-x divide-[#36404a] text-[#dfe3e6] ${className}`}>{children}</div>
);

const NodeEditor: React.FC = () => (
	<div className="relative grow overflow-hidden border-t border-[#7c8791] bg-[#64707b]">
		<svg className="absolute inset-0 h-full w-full" fill="none" stroke="#b9bfe6" strokeWidth="1.6">
			<path d="M503 363C540 363 477 336 514 336" />
			<path d="M661 490C700 490 657 363 696 363" />
		</svg>
		<Node title="Octane RGB Color" rows={["Output"]} ring="#8cab4e" className="left-[357px] top-[339px] h-[32px] w-[146px]" outputs={["Output"]} linked={["Output"]} />
		<Node title="Octane Glossy Material" rows={[...GLOSSY_IN, "Output"]} ring="#c9a526" active className="left-[514px] top-[312px] h-[186px] w-[148px]" inputs={GLOSSY_IN} outputs={["Output"]} linked={["Diffuse", "Output"]} />
		<Node title="Octane Override" rows={["Octane Override"]} ring="#b03c40" className="left-[696px] top-[339px] h-[32px] w-[146px]" inputs={["Octane Override"]} />
		<span className="absolute left-[837px] top-[358px] size-[9px] rounded-full border border-[#12151c]" />
		<span className="absolute left-[692px] top-[358px] size-[9px] rounded-full border border-[#12151c] bg-[#d5d0f2]" />
		<div className="relative flex items-center gap-[5px] px-2 pt-px">
			<span className="mr-[10px] size-[6px] rounded-full border-t border-l border-[#23282e]" />
			<NodeBar>
				{["wsNode", "wsGear", "wsGears"].map(n => <Tool key={n} icon={n} className="w-[21px] justify-center" />)}
			</NodeBar>
			<NodeBar className="w-[352px]">
				<Drop label="Workspace" text="Workspace: Octane Override Nodes" pad="pl-[5px]" className="grow" arrow="fill-white" />
				<Tool icon="grid" className="w-[52px] justify-center" />
			</NodeBar>
			<NodeBar>
				{["tree", "left", "up", "down"].map(n => <Tool key={n} icon={n} size={16} className="w-[21px] justify-center" />)}
			</NodeBar>
			<NodeBar className="w-[200px]">
				<Tool label="Add Selected" className="w-[99px] px-[5px]" />
				<Drop label="Add node" text="Add..." pad="pl-[6px]" className="grow" arrow="fill-white" />
			</NodeBar>
			<NodeBar>
				<Tool icon="diamond" className="w-[20px] justify-center" />
				<Tool icon="dot" size={14} className="w-[20px] justify-center bg-[#cf9238]" />
			</NodeBar>
			<div className="ml-auto flex items-center gap-1 pr-2">
				<Icon name="move" size={14} />
				<span className="w-px" />
				<Icon name="search" size={14} />
				<Icon name="expand" size={13} />
				<Icon name="gear" size={13} />
				<Icon name="right" size={11} />
			</div>
		</div>
	</div>
);

const OctaneWindow: React.FC = () => (
	<div className="absolute top-[389px] right-[207px] bottom-7 left-[837px] flex flex-col rounded-t-lg border border-[#e9f2fb] bg-[#d5e3f2] px-[6px] pb-[6px]">
		<div className="-mx-[6px] flex h-[29px] shrink-0 items-center gap-[5px] rounded-t-lg bg-linear-to-b from-[#bccbdc] to-[#d7e4f2] px-2 pt-1 font-['Open_Sans',sans-serif] text-[12px] text-[#333]">
			<Icon name="logo" size={15} />
			OctaneRender Setup
			<WindowButtons third="max" />
		</div>
		<div className="flex grow flex-col border-x border-b border-[#222] bg-[#484848]">
			<div className="h-1 shrink-0 bg-[#222]" />
			<div className="flex h-[59px] shrink-0 gap-1 border-t border-[#6c6c6c] pt-[5px] pl-1">
				<Group className="h-9">
					<Tool icon="viewport" label="Open Viewport" size={20} className="w-[115px] gap-[7px] px-[6px]" />
					<Tool icon="preview" label="Preview" size={20} className="w-[81px] gap-[6px] px-[6px]" />
					<Tool icon="lock" label="Lock" size={20} className="w-[76px] gap-[5px] px-[6px]" />
				</Group>
				<Group className="h-9">
					<Tool icon="kernel" label="Kernel" size={17} className="w-[78px] gap-2 px-[7px]" />
					<Tool icon="camera" label="Camera" size={17} className="w-[80px] gap-2 px-[7px]" />
					<Tool icon="env" label="Environment" size={17} className="w-[101px] gap-2 px-[7px]" />
				</Group>
				<Group className="h-9">
					{["terminal", "cuda", "mona", "reel"].map(n => <Tool key={n} icon={n} size={17} className="w-[35px] justify-center" />)}
				</Group>
			</div>
			<div className="flex grow border-t border-[#222]">
				<OctaneSidebar />
				<div className="flex grow flex-col">
					<NodeEditor />
					<div className="h-[55px] shrink-0 border-t border-[#5f6c78] px-[11px] pt-1 leading-[14px] whitespace-pre text-[#d8d8d8]">
						OctaneRender for Modo Version:{"   "}1.52.0.60
					</div>
				</div>
			</div>
		</div>
	</div>
);

const PreferenceDialog: React.FC = () => (
	<div role="dialog" aria-label="Preference Value" className="absolute top-[659px] left-[1082px] w-[327px] rounded-t-md border border-[#101820] bg-[#bdd3ec] px-[6px] pb-[6px] shadow-[inset_0_-1px_0_#35d0e0,inset_0_1px_0_#e8f4ff,inset_1px_0_0_#e8f4ff]">
		<div className="-mx-[5px] mt-px flex h-[27px] items-center gap-[3px] rounded-t-md bg-linear-to-b from-[#93b1d3] to-[#bdd3ec] px-2 pt-1 font-['Open_Sans',sans-serif] text-[12px] text-[#111]">
			<Icon name="logo" size={15} />
			Preference Value
			<button type="button" className="ml-auto h-[17px] w-[31px] rounded-xs border border-[#5f7d9e] bg-linear-to-b from-[#d3e2f2] to-[#9cb9d8] text-[12px] leading-[15px] font-bold text-[#4a5566]">?</button>
			<button type="button" aria-label="Close" className="-ml-px flex h-[17px] w-[31px] items-center justify-center rounded-xs border border-[#5c1a14] bg-linear-to-b from-[#e0948a] via-[#b53427] to-[#d0705a]">
				<Icon name="close" size={13} />
			</button>
		</div>
		<div className="flex h-[62px] bg-[#484848] text-[#d8d8d8]">
			<div className="flex w-[223px] gap-3 border-r border-[#2f2f2f] pt-[6px] pl-2">
				<svg width="27" height="27" viewBox="0 0 27 27" className="shrink-0">
					<path d="M8 0.5H19L26.5 8V19L19 26.5H8L0.5 19V8Z" fill="#ee0606" stroke="#8a0000" />
					<path d="M11.5 5H15.5L14.4 17H12.6Z" fill="#fff" />
					<circle cx="13.5" cy="20.5" r="2" fill="#fff" />
				</svg>
				<div className="flex grow flex-col leading-[14px]">
					<p>Error setting argument datatype.</p>
					<p>"Command unavailable"</p>
					<div className="mt-[4px] mr-[5px] flex items-center justify-end gap-1">
						<label htmlFor="future">In the future</label>
						<Group className="h-[20px] w-[18px]">
							<div className="relative grow">
								<select id="future" className="h-full w-full appearance-none bg-transparent text-transparent"><option aria-label="Ask" /></select>
								<svg viewBox="0 0 8 6" className="pointer-events-none absolute inset-0 m-auto h-[6px] w-2 fill-[#d0d0d0]"><path d="M0 0H8L4 6Z" /></svg>
							</div>
						</Group>
					</div>
				</div>
			</div>
			<Group className="mt-[5px] ml-1 h-5 w-[80px]"><Tool label="OK" hint="Ret" className="grow px-1" /></Group>
		</div>
	</div>
);

export default function App() {
	return (
		<div className="relative flex h-screen flex-col overflow-hidden border-l-3 border-[#7f95ad] bg-[#484848] font-['Roboto','Liberation_Sans',sans-serif] text-[11px] leading-[14px]">
			<Gradients />
			<header className="flex h-[22px] shrink-0 items-center gap-[9px] border-t border-[#4c5060] bg-linear-to-b from-[#b9c8da] to-[#d7e4f1] pl-1 font-['Open_Sans',sans-serif] text-[12px] text-[#333]">
				<Icon name="logo" size={14} />
				Untitled* - MODO
				<WindowButtons third="restore" />
			</header>
			<nav className="flex h-[25px] shrink-0 items-center gap-px border-b-4 border-[#222] pl-1 text-[#d8d8d8]">
				{MENU.map(m => <a key={m} href="#" className="px-2 pt-[2px]">{m}</a>)}
			</nav>
			<MainToolbar />
			<div className="flex min-h-0 grow">
				<main className="flex min-w-0 grow flex-col border-t border-[#6c6c6c]">
					<div className="mx-1 mt-[3px] flex h-[626px] shrink-0 justify-between overflow-hidden bg-black">
						<div className="pl-[15px] pt-px">
							<div className="flex gap-[5px]">
								<Chip className="w-[49px] bg-[#272727]">Options</Chip>
								<Chip className="w-[80px] bg-[#272727]">Effect: (Shadi...</Chip>
								<Chip className="w-[89px] bg-[#272727]">Paused</Chip>
								<Chip className="w-[78px] bg-[#272727]">LUT: errorval</Chip>
							</div>
							<div className="mt-1 flex gap-[5px]">
								<Chip className="w-[134px] bg-[#272727]">(Render Camera)</Chip>
								<Chip className="w-[89px] bg-[#272727]">Shading: Full</Chip>
							</div>
							<svg width="80" height="50" className="mt-[242px] ml-[857px]">
								<path d="M0 0V50H80V38Z" fill="#d4d4d4" />
							</svg>
						</div>
						<div className="flex h-[18px] items-center gap-[5px] pr-[14px]">
							<Icon name="move" size={14} />
							<Icon name="rotate" size={14} />
							<Icon name="search" size={14} />
							<Icon name="expand" size={13} />
							<Icon name="gear" size={13} />
							<Icon name="right" size={11} />
						</div>
					</div>
					<div className="h-[3px] shrink-0" />
					<Tabs tabs={["3D View", "UV Texture View", "Render Preset Browser", "Gradient Editor", "Schematic"]} />
					<div className="h-[3px] shrink-0" />
					<Viewport3D />
					<Timeline />
					<Transport />
				</main>
				<ItemList />
				<PropertiesPanel />
			</div>
			<OctaneWindow />
			<PreferenceDialog />
		</div>
	);
}
